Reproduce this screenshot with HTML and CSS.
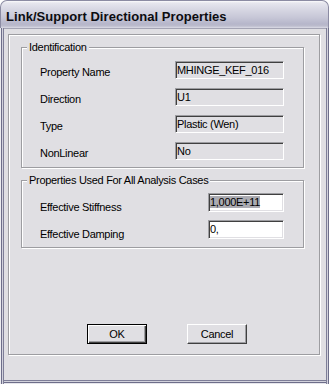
FILE: index.html
```html
<!DOCTYPE html>
<html lang="en">
<head>
    <meta charset="UTF-8">
    <title>Link/Support Directional Properties</title>
    <link rel="stylesheet" href="styles.css">
</head>
<body>
    <div class="window">
        <div class="titlebar">Link/Support Directional Properties</div>
        <div class="frame">
            <div class="panel">
                <div class="group group-ident">
                    <span class="group-title">Identification</span>
                    <div class="rows rows-ident">
                        <div class="label">Property Name</div>
                        <div class="field">MHINGE_KEF_016</div>
                        <div class="label">Direction</div>
                        <div class="field">U1</div>
                        <div class="label">Type</div>
                        <div class="field">Plastic (Wen)</div>
                        <div class="label">NonLinear</div>
                        <div class="field">No</div>
                    </div>
                </div>

                <div class="group group-cases">
                    <span class="group-title">Properties Used For All Analysis Cases</span>
                    <div class="rows rows-cases">
                        <div class="label">Effective Stiffness</div>
                        <div class="field field-white"><span class="selected">1,000E+11</span></div>
                        <div class="label">Effective Damping</div>
                        <div class="field field-white">0,</div>
                    </div>
                </div>

                <div class="buttons">
                    <button class="btn btn-default">OK</button>
                    <button class="btn">Cancel</button>
                </div>
            </div>
        </div>
    </div>
</body>
</html>
```

FILE: styles.css
```css
body {
    margin: 0;
    background-color: #fff;
    font-family: "Liberation Sans", Arial, sans-serif;
    font-size: 11px;
    letter-spacing: -0.3px;
    color: #000;
}

.window {
    width: 329px;
    height: 384px;
    display: flex;
    flex-direction: column;
}

.titlebar {
    height: 28px;
    box-sizing: border-box;
    border: 1px solid #8b8ba3;
    border-bottom: none;
    border-radius: 7px 7px 0 0;
    background: linear-gradient(to bottom, #fbfbfd 0px, #e6e6ee 2px, #d8d8e4 8px, #c8c8d8 16px, #b6b6ca 23px, #bcbccd 25px, #dcdce6 27px);
    padding: 8px 0 0 5px;
    font-size: 13px;
    font-weight: bold;
    letter-spacing: 0.05px;
    line-height: 16px;
    color: #0c0c10;
    white-space: nowrap;
}

.frame {
    flex: 1;
    background-color: #e0dfe3;
    padding: 6px 0 0 8px;
    box-shadow:
        inset 1px 0 0 #ececf0,
        inset 2px 0 0 #6e6e8a,
        inset 3px 0 0 #d2d2dc,
        inset 4px 0 0 #7e7e98,
        inset -1px 0 0 #6e6e8a,
        inset -2px 0 0 #d2d2dc,
        inset -3px 0 0 #7e7e98,
        inset 0 -1px 0 #e6e6ec,
        inset 0 -2px 0 #6e6e8a,
        inset 0 -3px 0 #d2d2dc,
        inset 0 -4px 0 #7e7e98,
        inset 0 1px 0 #a4a4b4;
}

/* etched frames */
.panel,
.group {
    box-sizing: border-box;
    border: 1px solid #9d9da1;
    box-shadow: inset 1px 1px 0 #fff, 1px 1px 0 #fff;
}

.panel {
    width: 312px;
    height: 321px;
    padding: 12px 0 0 12px;
    display: flex;
    flex-direction: column;
}

.group {
    position: relative;
    width: 283px;
}

.group-title {
    position: absolute;
    top: -7px;
    left: 5px;
    padding: 0 2px;
    line-height: 13px;
    background-color: #e0dfe3;
    white-space: nowrap;
}

.group-ident {
    height: 121px;
    padding: 13px 19px 0 18px;
}

.group-cases {
    height: 68px;
    margin-top: 12px;
    padding: 12px 19px 0 18px;
}

.rows {
    display: grid;
    align-items: start;
}

.rows-ident {
    grid-template-columns: 1fr 109px;
    row-gap: 9px;
}

.rows-cases {
    grid-template-columns: 1fr 76px;
    row-gap: 6px;
}

.label {
    line-height: 13px;
    margin-top: 5px;
    white-space: nowrap;
}

.rows-cases .label {
    margin-top: 8px;
}

.field {
    height: 18px;
    box-sizing: border-box;
    border: 1px solid;
    border-color: #9d9da1 #fff #fff #9d9da1;
    box-shadow: inset 1px 1px 0 #404040, inset -1px -1px 0 #e0dfe3;
    padding: 0 0 0 1px;
    line-height: 16px;
    white-space: nowrap;
    overflow: hidden;
}

.field-white {
    height: 19px;
    line-height: 17px;
    background-color: #fff;
}

.selected {
    background-color: #ababb2;
}

.buttons {
    display: flex;
    gap: 40px;
    margin-top: auto;
    margin-bottom: 10px;
    padding-left: 66px;
}

.btn {
    width: 60px;
    height: 20px;
    box-sizing: border-box;
    padding: 0;
    font: inherit;
    letter-spacing: inherit;
    color: #000;
    line-height: 18px;
    text-align: center;
    background-color: #e0dfe3;
    border: 1px solid;
    border-color: #fff #404040 #404040 #fff;
    border-radius: 0;
    box-shadow: inset -1px -1px 0 #9d9da1;
}

.btn-default {
    border-color: #000;
    box-shadow: inset 1px 1px 0 #fff, inset -1px -1px 0 #404040, inset -2px -2px 0 #9d9da1;
}
```
